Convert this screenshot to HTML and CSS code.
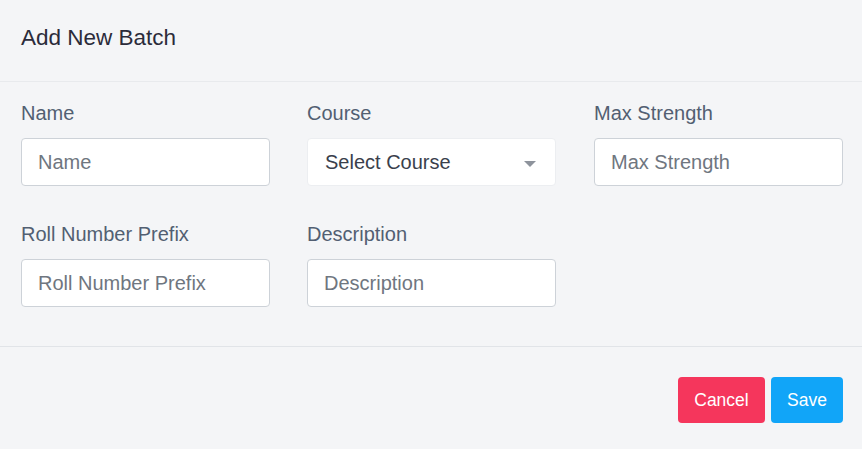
FILE: index.html
```html
<!DOCTYPE html>
<html>
<head>
<meta charset="utf-8">
<link rel="stylesheet" href="styles.css">
</head>
<body>
<div class="modal">
  <div class="modal-header">
    <h2 class="title">Add New Batch</h2>
  </div>
  <div class="modal-body">
    <div class="grid">
      <div class="field">
        <label class="label">Name</label>
        <input class="input" placeholder="Name">
      </div>
      <div class="field">
        <label class="label">Course</label>
        <div class="select">
          <span>Select Course</span>
          <svg class="caret" width="12" height="6" viewBox="0 0 12 6"><path d="M0 0 L12 0 L6 6 Z" fill="#8e939c"/></svg>
        </div>
      </div>
      <div class="field">
        <label class="label">Max Strength</label>
        <input class="input" placeholder="Max Strength">
      </div>
      <div class="field">
        <label class="label">Roll Number Prefix</label>
        <input class="input" placeholder="Roll Number Prefix">
      </div>
      <div class="field">
        <label class="label">Description</label>
        <input class="input" placeholder="Description">
      </div>
    </div>
  </div>
  <div class="modal-footer">
    <button class="btn btn-cancel">Cancel</button>
    <button class="btn btn-save">Save</button>
  </div>
</div>
</body>
</html>
```

FILE: styles.css
```css
* { box-sizing: border-box; }
html, body {
  margin: 0;
  padding: 0;
  background: #f4f5f7;
  font-family: "Liberation Sans", Arial, sans-serif;
}
.modal {
  width: 862px;
  height: 449px;
  background: #f4f5f7;
}
.modal-header {
  height: 82px;
  padding: 0 21px;
  display: flex;
  align-items: center;
  border-bottom: 1px solid #e8eaed;
}
.title {
  margin: 0 0 6px 0;
  font-size: 22.5px;
  font-weight: 400;
  color: #2b2b3a;
}
.modal-body {
  padding: 19px 19px 39px 21px;
  border-bottom: 1px solid #e1e4e8;
}
.grid {
  display: grid;
  grid-template-columns: 249px 249px 250px;
  column-gap: 37px;
  row-gap: 36px;
}
.field {
  display: flex;
  flex-direction: column;
}
.field:nth-child(3) {
  margin-left: 1px;
}
.label {
  font-size: 20px;
  line-height: 24px;
  color: #525f72;
  margin-bottom: 13px;
}
.input {
  height: 48px;
  width: 100%;
  border: 1px solid #cdd2d8;
  border-radius: 4px;
  background: #fff;
  padding: 0 16px;
  font-family: "Liberation Sans", Arial, sans-serif;
  font-size: 20px;
  color: #32325d;
  outline: none;
}
.input::placeholder {
  color: #6f7680;
  opacity: 1;
}
.select {
  height: 48px;
  width: 100%;
  border: 1px solid #eceef1;
  border-radius: 4px;
  background: #fff;
  padding: 0 19px 0 17px;
  display: flex;
  align-items: center;
  justify-content: space-between;
  font-size: 20px;
  color: #3a3f4c;
}
.caret {
  display: block;
  margin-top: 3px;
}
.modal-footer {
  display: flex;
  justify-content: flex-end;
  gap: 6px;
  padding: 30px 19px 0 0;
}
.btn {
  height: 46px;
  border: none;
  border-radius: 4px;
  color: #fff;
  font-family: "Liberation Sans", Arial, sans-serif;
  font-size: 17.5px;
  padding: 0;
}
.btn-cancel {
  width: 87px;
  background: #f5365c;
}
.btn-save {
  width: 72px;
  background: #11a5f8;
}
```
